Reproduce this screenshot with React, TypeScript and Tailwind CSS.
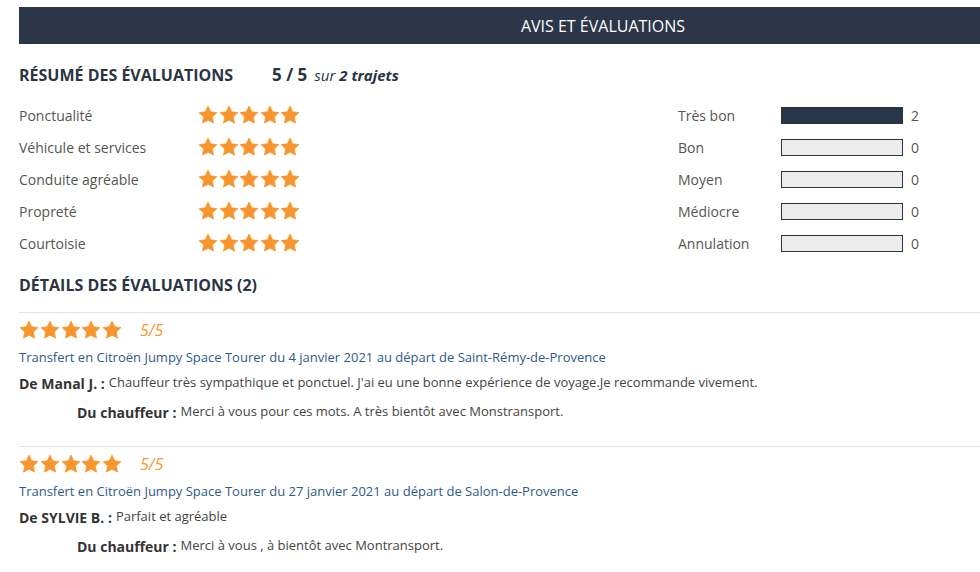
import React from 'react';

const criteria = ['Ponctualité', 'Véhicule et services', 'Conduite agréable', 'Propreté', 'Courtoisie'];

const levels = [
  { label: 'Très bon', count: 2 },
  { label: 'Bon', count: 0 },
  { label: 'Moyen', count: 0 },
  { label: 'Médiocre', count: 0 },
  { label: 'Annulation', count: 0 },
];

const reviews = [
  {
    trip: 'Transfert en Citroën Jumpy Space Tourer du 4 janvier 2021 au départ de Saint-Rémy-de-Provence',
    author: 'Manal J.',
    text: "Chauffeur très sympathique et ponctuel. J'ai eu une bonne expérience de voyage.Je recommande vivement.",
    reply: 'Merci à vous pour ces mots. A très bientôt avec Monstransport.',
  },
  {
    trip: 'Transfert en Citroën Jumpy Space Tourer du 27 janvier 2021 au départ de Salon-de-Provence',
    author: 'SYLVIE B.',
    text: 'Parfait et agréable',
    reply: 'Merci à vous , à bientôt avec Montransport.',
  },
];

function Star({ size }: { size: number }) {
  return (
    <svg width={size} height={size} viewBox="0 0 24 24" className="shrink-0">
      <path
        d="M12 1.2l3.3 6.9 7.5 1-5.5 5.2 1.4 7.5L12 18.2l-6.7 3.6 1.4-7.5L1.2 9.1l7.5-1z"
        fill="#f7952e"
        stroke="#f7952e"
        strokeWidth="0.8"
        strokeLinejoin="round"
      />
    </svg>
  );
}

function Stars({ size, gap }: { size: number; gap: string }) {
  return (
    <div className={`flex ${gap}`}>
      {[0, 1, 2, 3, 4].map((i) => (
        <Star key={i} size={size} />
      ))}
    </div>
  );
}

export default function App() {
  return (
    <div className="w-[980px] h-[572px] overflow-hidden bg-white font-['Open_Sans',sans-serif]">
      <div className="ml-[19px] w-[1168px] pt-[7px]">
        {/* Bandeau */}
        <div className="h-[37px] bg-[#2b3648] flex items-center justify-center text-white text-[16px]">
          AVIS ET ÉVALUATIONS
        </div>

        {/* Résumé */}
        <div className="mt-[17px] h-[28px] flex items-center">
          <h2 className="w-[253px] text-[16px] font-bold text-[#2b3443]">RÉSUMÉ DES ÉVALUATIONS</h2>
          <span className="text-[17px] font-bold text-[#2b3443]">5 / 5</span>
          <span className="ml-[7px] text-[15px] italic text-[#2b3443]">
            sur <b>2 trajets</b>
          </span>
        </div>

        <div className="mt-[10px] flex">
          <div className="w-[659px]">
            {criteria.map((c) => (
              <div key={c} className="h-[32px] flex items-center">
                <span className="w-[179px] text-[14px] text-[#555]">{c}</span>
                <Stars size={20} gap="gap-[0.6px]" />
              </div>
            ))}
          </div>
          <div>
            {levels.map((l) => (
              <div key={l.label} className="h-[32px] flex items-center">
                <span className="w-[103px] text-[14px] text-[#555]">{l.label}</span>
                <div
                  className={`w-[122px] h-[17px] border border-[#2b3443] ${
                    l.count > 0 ? 'bg-[#283448]' : 'bg-[#ececec]'
                  }`}
                />
                <span className="ml-[8px] text-[14px] text-[#555]">{l.count}</span>
              </div>
            ))}
          </div>
        </div>

        {/* Détails */}
        <div className="mt-[12px] h-[28px] flex items-center">
          <h2 className="text-[16px] font-bold text-[#2b3443]">DÉTAILS DES ÉVALUATIONS (2)</h2>
        </div>

        <div className="mt-[13px]">
          {reviews.map((r, i) => (
            <div key={i} className="border-t border-[#e3e3e3] pt-[5px] pb-[24px]">
              <div className="h-[24px] flex items-center">
                <Stars size={20} gap="gap-[0.75px]" />
                <span className="ml-[18px] text-[16px] italic text-[#f7952e]">5/5</span>
              </div>
              <div className="mt-[6px] h-[20px] flex items-center text-[13px] text-[#2f5a8a]">{r.trip}</div>
              <div className="mt-[5px] h-[20px] flex items-center text-[13px] text-[#444]">
                <b className="text-[14px] text-[#333] mr-[4px]">De {r.author} :</b>
                {r.text}
              </div>
              <div className="mt-[9px] h-[20px] flex items-center pl-[58px] text-[13px] text-[#444]">
                <b className="text-[14px] text-[#333] mr-[4px]">Du chauffeur :</b>
                {r.reply}
              </div>
            </div>
          ))}
        </div>
      </div>
    </div>
  );
}
